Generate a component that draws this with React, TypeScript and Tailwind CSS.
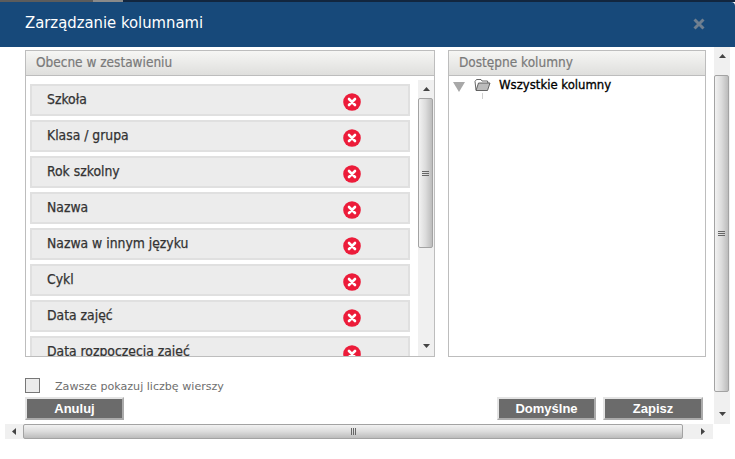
const columns = [
  "Szkoła",
  "Klasa / grupa",
  "Rok szkolny",
  "Nazwa",
  "Nazwa w innym języku",
  "Cykl",
  "Data zajęć",
  "Data rozpoczęcia zajęć",
];

const tahoma = "font-['DejaVu_Sans_Condensed','DejaVu_Sans',sans-serif]";

function RemoveIcon() {
  return (
    <svg width="18" height="18" viewBox="0 0 18 18" className="mt-[3px] shrink-0">
      <circle cx="9" cy="9" r="8.8" fill="#ec1c3a" />
      <path d="M6 6l6 6M12 6l-6 6" stroke="#fff" strokeWidth="2.6" strokeLinecap="round" />
    </svg>
  );
}

function Arrow({ dir }: { dir: "up" | "down" | "left" | "right" }) {
  const d = {
    up: "M0 4L3.5 0L7 4Z",
    down: "M0 0H7L3.5 4Z",
    left: "M5 0V7L1 3.5Z",
    right: "M1 0V7L5 3.5Z",
  }[dir];
  return (
    <svg width="7" height="7" viewBox="0 0 7 7" className="shrink-0">
      <path d={d} fill="#444" />
    </svg>
  );
}

function VScrollbar({ thumb, className }: { thumb: string; className: string }) {
  return (
    <div className={`flex flex-col bg-[#f0f0f0] ${className}`}>
      <div className="flex h-[18px] items-center justify-center pt-[3px]">
        <Arrow dir="up" />
      </div>
      <div className="flex-1">
        <div
          className={`flex w-[15px] items-center justify-center rounded-[2px] border border-[#a3a3a3] bg-gradient-to-r from-[#f2f2f2] via-[#dcdcdc] to-[#bcbcbc] ${thumb}`}
        >
          <div className="flex flex-col gap-px">
            <div className="h-px w-[7px] bg-[#666]" />
            <div className="h-px w-[7px] bg-[#666]" />
            <div className="h-px w-[7px] bg-[#666]" />
          </div>
        </div>
      </div>
      <div className="flex h-[17px] items-center justify-center pb-px">
        <Arrow dir="down" />
      </div>
    </div>
  );
}

function PanelHeader({ title }: { title: string }) {
  return (
    <div
      className={`h-[25px] border-b border-[#bdbdbd] bg-gradient-to-b from-[#f6f6f4] to-[#dfdfdd] pl-[10px] text-[13.5px] leading-[23px] text-[#7a7a7a] [-webkit-text-stroke:0.2px_#7a7a7a] ${tahoma}`}
    >
      {title}
    </div>
  );
}

function ActionButton({ label, width }: { label: string; width: string }) {
  return (
    <button
      className={`h-[23px] border-2 border-[#ababab] border-t-[#e4e4e4] border-l-[#e4e4e4] bg-[#6b6b6b] pb-px text-[13px] leading-[15px] font-bold text-white font-['Liberation_Sans',sans-serif] ${width}`}
    >
      {label}
    </button>
  );
}

export default function App() {
  return (
    <div className="flex h-[459px] w-[735px] flex-col overflow-hidden bg-white">
      <div className="flex h-[2px] shrink-0">
        <div className="w-[93px] bg-[#5c5c5c]" />
        <div className="w-[30px] bg-[#8a8a8a]" />
        <div className="flex-1 bg-[#12263f]" />
      </div>

      <div className="flex h-[45px] shrink-0 items-center justify-between rounded-tr-[4px] bg-[#17497a] pr-[30px] pb-[2px] pl-[25px]">
        <span className={`text-[16.5px] text-white ${tahoma}`}>Zarządzanie kolumnami</span>
        <svg width="12" height="12" viewBox="0 0 12 12">
          <path d="M1.5 1.5l9 9M10.5 1.5l-9 9" stroke="#6f7f90" strokeWidth="3" />
        </svg>
      </div>

      <div className="flex h-[377px] shrink-0">
        <div className="w-[714px] pt-[3px] pl-[25px]">
          <div className="flex h-[307px] gap-[13px]">
            <div className="flex w-[410px] flex-col border border-[#bdbdbd]">
              <PanelHeader title="Obecne w zestawieniu" />
              <div className="flex min-h-0 flex-1">
                <div className="flex-1 overflow-hidden pt-[8px] pl-[4px]">
                  {columns.map((name) => (
                    <div
                      key={name}
                      className={`mb-[4px] flex h-[32px] w-[380px] items-center border-2 border-[#e0e0e0] bg-[#ececec] pl-[15px] text-[13.8px] text-[#333] [-webkit-text-stroke:0.25px_#333] ${tahoma}`}
                    >
                      <span className="flex-1 pb-[2px]">{name}</span>
                      <span className="mr-[47px] flex">
                        <RemoveIcon />
                      </span>
                    </div>
                  ))}
                </div>
                <VScrollbar className="mt-[4px] w-[16px]" thumb="h-[150px]" />
              </div>
            </div>

            <div className="flex w-[258px] flex-col border border-[#bdbdbd]">
              <PanelHeader title="Dostępne kolumny" />
              <div className={`flex items-start pt-[2px] pl-[3px] text-[13px] text-black [-webkit-text-stroke:0.3px_#000] ${tahoma}`}>
                <svg width="14" height="12" viewBox="0 0 14 12" className="mt-[3px]">
                  <path d="M1 1H13L7 11Z" fill="#a8a8a8" stroke="none" />
                </svg>
                <div className="ml-[8px] flex flex-col items-center">
                  <svg width="17" height="14" viewBox="0 0 17 14">
                    <path d="M2 12L1 3.5L2.5 1.5H7L8 3H13.5L14 5" fill="#fff" stroke="#555" strokeWidth="0.9" />
                    <path d="M2 12.5L4.5 5H16L13.5 12.5Z" fill="#bcbcbc" stroke="#555" strokeWidth="0.9" />
                  </svg>
                  <div className="mt-[1px] h-[6px] w-px bg-[#d0d0d0]" />
                </div>
                <span className="ml-[8px] -mt-px leading-[16px]">Wszystkie kolumny</span>
              </div>
            </div>
          </div>

          <div className="mt-[21px] flex h-[15px] items-center">
            <div className="h-[15px] w-[15px] border border-[#777] bg-[#ececec]" />
            <span className="mt-px ml-[15px] text-[11.1px] leading-[13px] text-[#6e6e6e] font-['DejaVu_Sans',sans-serif]">
              Zawsze pokazuj liczbę wierszy
            </span>
          </div>

          <div className="mt-[4px] flex">
            <ActionButton label="Anuluj" width="w-[99px]" />
            <div className="w-[373px]" />
            <ActionButton label="Domyślne" width="w-[99px]" />
            <div className="w-[7px]" />
            <ActionButton label="Zapisz" width="w-[100px]" />
          </div>
        </div>

        <VScrollbar className="w-[16px]" thumb="mt-[10px] h-[317px]" />
      </div>

      <div className="ml-[5px] flex h-[15px] w-[708px] shrink-0 items-center bg-[#f0f0f0]">
        <div className="flex w-[18px] justify-center">
          <Arrow dir="left" />
        </div>
        <div className="flex h-[15px] w-[660px] items-center justify-center rounded-[2px] border border-[#a3a3a3] bg-gradient-to-b from-[#f2f2f2] via-[#dcdcdc] to-[#bcbcbc]">
          <div className="flex gap-px">
            <div className="h-[7px] w-px bg-[#666]" />
            <div className="h-[7px] w-px bg-[#666]" />
            <div className="h-[7px] w-px bg-[#666]" />
          </div>
        </div>
        <div className="flex flex-1 justify-end pr-[6px]">
          <Arrow dir="right" />
        </div>
      </div>
    </div>
  );
}
